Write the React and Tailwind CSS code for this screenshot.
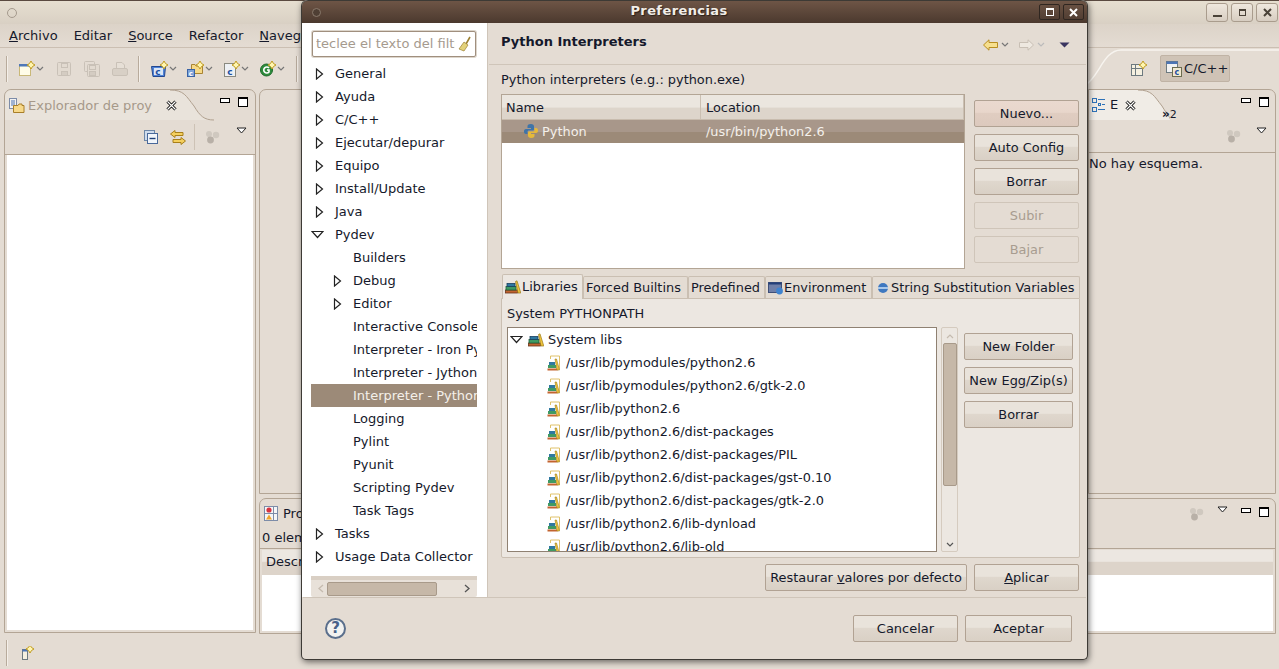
import React from 'react';

const FONT = "font-['DejaVu_Sans','Liberation_Sans',sans-serif]";

// small triangles for the trees
function Closed() {
  return (
    <svg width="9" height="12" viewBox="0 0 9 12" className="shrink-0">
      <path d="M1.5 1 L7.5 6 L1.5 11 Z" fill="#fff" stroke="#222" strokeWidth="1.2" />
    </svg>
  );
}

function Open() {
  return (
    <svg width="13" height="9" viewBox="0 0 13 9" className="shrink-0">
      <path d="M1 1.5 L12 1.5 L6.5 7.5 Z" fill="#fff" stroke="#222" strokeWidth="1.2" />
    </svg>
  );
}

function Chevron({ color = '#777' }) {
  return (
    <svg width="8" height="6" viewBox="0 0 8 6" className="shrink-0">
      <path d="M1 1 L4 4 L7 1" fill="none" stroke={color} strokeWidth="1.2" />
    </svg>
  );
}

function Spark({ x, y }) {
  return (
    <path
      d={`M${x} ${y - 4} Q${x + 1} ${y - 1} ${x + 4} ${y} Q${x + 1} ${y + 1} ${x} ${y + 4} Q${x - 1} ${y + 1} ${x - 4} ${y} Q${x - 1} ${y - 1} ${x} ${y - 4} Z`}
      fill="#fff6b0"
      stroke="#c09a20"
      strokeWidth="1"
    />
  );
}

function NewIcon() {
  return (
    <svg width="18" height="16" viewBox="0 0 18 16" className="shrink-0">
      <rect x="1.5" y="3.5" width="11" height="11" fill="#fffce8" stroke="#c9b878" />
      <rect x="1" y="3" width="12" height="2.5" fill="#4f78b8" />
      <Spark x={13} y={4} />
    </svg>
  );
}

function DiskIcon({ double }) {
  return (
    <svg width="16" height="16" viewBox="0 0 16 16" fill="none" stroke="#c9c1b7" className="shrink-0">
      {double && <rect x="0.5" y="0.5" width="10" height="10" rx="1" />}
      <rect x={double ? 3.5 : 1.5} y={double ? 3.5 : 1.5} width={double ? 12 : 13} height={double ? 12 : 13} rx="1" fill="#e2dad0" />
      <rect x="5.5" y={double ? 4.5 : 2.5} width="6" height="4" />
      <rect x="5.5" y="10.5" width="6" height="4" fill="#d4ccc2" />
    </svg>
  );
}

function PrintIcon() {
  return (
    <svg width="16" height="16" viewBox="0 0 16 16" fill="#e6dfd6" stroke="#c9c1b7" className="shrink-0">
      <path d="M4.5 7.5 L4.5 1.5 L10 1.5 L12.5 4 L12.5 7.5" />
      <rect x="0.5" y="7.5" width="15" height="7" rx="1.5" fill="#d8d0c6" />
    </svg>
  );
}

function CIcon({ kind }) {
  if (kind === 'g') {
    return (
      <svg width="18" height="16" viewBox="0 0 18 16" className="shrink-0">
        <circle cx="7.5" cy="9" r="6" fill="#2e8b3d" stroke="#1c6a2a" />
        <path d="M10 7 A3 3 0 1 0 10 11 L10 9 L8 9" fill="none" stroke="#fff" strokeWidth="1.6" />
        <Spark x={13} y={4} />
      </svg>
    );
  }
  const body =
    kind === 'folder' ? (
      <>
        <path d="M4.5 3.5 L8 3.5 L9 5 L15.5 5 L15.5 12.5 L4.5 12.5 Z" fill="#f6d987" stroke="#a98433" />
        <rect x="0.5" y="8.5" width="7" height="7" fill="#7fa3d8" stroke="#3a63a5" />
      </>
    ) : kind === 'file' ? (
      <rect x="1.5" y="2.5" width="11" height="13" fill="#eef1f4" stroke="#8a8a80" />
    ) : (
      <>
        <path d="M0.5 5.5 L14.5 5.5 L13.5 15.5 L2 15.5 Z" fill="#4f84d8" stroke="#23478f" />
        <rect x="3" y="7" width="9" height="7" fill="#dbe6f6" />
      </>
    );
  const small = kind === 'folder';
  return (
    <svg width="18" height="16" viewBox="0 0 18 16" className="shrink-0">
      {body}
      <text x={small ? 1.8 : 4.2} y={small ? 14.5 : 13.5} fontSize={small ? 7 : 9} fontWeight="700" fill={small ? '#fff' : '#1f4fa0'} fontFamily="DejaVu Sans">c</text>
      <Spark x={13} y={4} />
    </svg>
  );
}

function DropIcon({ children, className = '' }) {
  return (
    <div className={`flex items-center ${className}`}>
      {children}
      <Chevron />
    </div>
  );
}

function Sep() {
  return <div className="w-[2px] h-[26px] bg-[#f4efe9] border-l border-[#b8ab9c] shrink-0" />;
}

function MinMax() {
  return (
    <div className="flex items-start gap-[8px]">
      <div className="w-[10px] h-[5px] mt-px border border-black bg-white" />
      <div className="w-[10px] h-[10px] border border-black bg-white border-t-[2px]" />
    </div>
  );
}

function ViewMenu() {
  return (
    <svg width="11" height="7" viewBox="0 0 11 7">
      <path d="M1 1 L10 1 L5.5 6 Z" fill="#fff" stroke="#222" />
    </svg>
  );
}

function Dots() {
  return (
    <svg width="15" height="14" viewBox="0 0 15 14" fill="#cfc8bf">
      <circle cx="4" cy="4" r="3" />
      <circle cx="11" cy="5" r="3.2" />
      <circle cx="5.5" cy="10" r="3.4" fill="#b8b0a7" />
    </svg>
  );
}

function CloseX() {
  return (
    <svg width="11" height="11" viewBox="0 0 11 11" className="shrink-0 relative z-10">
      <path d="M1.5 1.5 L9.5 9.5 M9.5 1.5 L1.5 9.5" stroke="#000" strokeWidth="3" />
      <path d="M1.5 1.5 L9.5 9.5 M9.5 1.5 L1.5 9.5" stroke="#fff" strokeWidth="1.2" />
    </svg>
  );
}

// curve that finishes a view tab
function TabCurve({ width = 44, fill = '#e9e3db' }) {
  return (
    <svg width={width} height="31" viewBox={`0 0 ${width} 31`} className="shrink-0 -ml-px">
      <path d={`M0 0 C14 0 16 6 24 16 C30 26 34 30 ${width} 30 L0 30 Z`} fill={fill} />
      <path d={`M0 0 C14 0 16 6 24 16 C30 26 34 30 ${width} 30`} fill="none" stroke="#b0a08f" />
    </svg>
  );
}

function FolderProjIcon() {
  return (
    <svg width="16" height="16" viewBox="0 0 16 16" className="shrink-0">
      <rect x="0.5" y="0.5" width="7" height="10" fill="#f2f2f2" stroke="#7d8ca8" />
      <path d="M2 3h4M2 5h4M2 7h4" stroke="#4d75b5" />
      <path d="M4.5 7.5 L9 7.5 L10 6 L13 6 L13 7.5 L15 7.5 L15 14.5 L4.5 14.5 Z" fill="#f7d98a" stroke="#a87f2a" />
    </svg>
  );
}

function ProblemsIcon() {
  return (
    <svg width="15" height="15" viewBox="0 0 15 15" className="shrink-0">
      <rect x="0.5" y="0.5" width="13" height="14" fill="#f6f6f6" stroke="#7d8ca8" />
      <path d="M0.5 7.5h13M9.5 0.5v14" stroke="#7d8ca8" />
      <circle cx="5" cy="4" r="2.6" fill="#d8343f" />
      <path d="M5 8.5 L8 13.5 L2 13.5 Z" fill="#f0a52c" />
    </svg>
  );
}

function OutlineIcon() {
  return (
    <svg width="14" height="14" viewBox="0 0 14 14" fill="none" stroke="#2e72b8" className="shrink-0">
      <rect x="0.5" y="0.5" width="4" height="4" />
      <rect x="0.5" y="9.5" width="4" height="4" />
      <rect x="6.5" y="5.5" width="2" height="2" />
      <path d="M6 1.5h7M6 11.5h7M10 6.5h3" />
    </svg>
  );
}

function PerspIcon() {
  return (
    <svg width="16" height="15" viewBox="0 0 16 15" className="shrink-0">
      <rect x="0.5" y="3.5" width="11" height="11" fill="#f5f0e0" stroke="#6d7a80" />
      <path d="M0.5 7.5h11M4.5 3.5v11" stroke="#6d7a80" />
      <Spark x={12} y={4} />
    </svg>
  );
}

function CppPerspIcon() {
  return (
    <svg width="16" height="16" viewBox="0 0 16 16" className="shrink-0">
      <rect x="0.5" y="0.5" width="11" height="11" fill="#f2f2f2" stroke="#6d7a80" />
      <rect x="0.5" y="0.5" width="11" height="2.5" fill="#4d75b5" />
      <rect x="6.5" y="6.5" width="9" height="9" fill="#f0e8d0" stroke="#6d6d50" />
      <text x="8.5" y="14" fontSize="8" fontWeight="700" fill="#1f4fa0" fontFamily="DejaVu Sans">c</text>
    </svg>
  );
}

function PythonIcon() {
  return (
    <svg width="16" height="16" viewBox="0 0 16 16" className="shrink-0">
      <path d="M8 1 C5 1 4.5 2 4.5 3.5 L4.5 5 L8 5 L8 6 L3 6 C1.5 6 1 7 1 8.5 C1 10 1.5 11 3 11 L4.5 11 L4.5 9 C4.5 8 5 7.5 6 7.5 L9.5 7.5 C10.5 7.5 11 7 11 6 L11 3.5 C11 2 10 1 8 1 Z" fill="#3f74a8" />
      <path d="M8 15 C11 15 11.5 14 11.5 12.5 L11.5 11 L8 11 L8 10 L13 10 C14.5 10 15 9 15 7.5 C15 6 14.5 5 13 5 L11.5 5 L11.5 7 C11.5 8 11 8.5 10 8.5 L6.5 8.5 C5.5 8.5 5 9 5 10 L5 12.5 C5 14 6 15 8 15 Z" fill="#e6b93a" />
    </svg>
  );
}

function BooksIcon() {
  return (
    <svg width="16" height="14" viewBox="0 0 16 14" className="shrink-0">
      <rect x="0.5" y="10" width="12" height="3" fill="#c2632f" stroke="#6a3418" strokeWidth="0.8" />
      <rect x="1" y="6.5" width="10" height="3.5" fill="#3f9a63" stroke="#1f5f3a" strokeWidth="0.8" />
      <rect x="2" y="3.5" width="8" height="3" fill="#2f78a0" stroke="#1a4060" strokeWidth="0.8" />
      <path d="M10.5 1.5 L12 0.8 L15.8 13 L13 13 Z" fill="#f0c53c" stroke="#9b7a18" strokeWidth="0.7" />
    </svg>
  );
}

function JarIcon() {
  return (
    <svg width="14" height="16" viewBox="0 0 14 16" className="shrink-0">
      <path d="M3.5 4 L3.5 1 L12.5 1 L12.5 14.5" fill="none" stroke="#e0c26a" />
      <path d="M0.5 14.5 L10.5 14.5" stroke="#c2632f" strokeWidth="2" />
      <rect x="1" y="10" width="8" height="3" fill="#3f9a63" />
      <rect x="2" y="7" width="6" height="3" fill="#2f78a0" />
      <path d="M8 4 L9.5 4 L12.5 15 L10 15 Z" fill="#f0c53c" stroke="#9b7a18" strokeWidth="0.6" />
    </svg>
  );
}

function Btn({ children, w = 'w-[105px]', hot, disabled }) {
  const bg = hot
    ? 'bg-[linear-gradient(#ead9cf_0%,#e8d6cb_45%,#e0cdc1_50%,#dcc9bd_100%)]'
    : 'bg-[linear-gradient(#e9e3db_0%,#e9e3db_45%,#dfd7cd_50%,#d9d0c5_100%)]';
  return (
    <div
      className={`${w} h-[27px] shrink-0 rounded-[2px] border border-[#b1a293] flex items-center justify-center whitespace-nowrap ${
        disabled ? 'bg-[#e4dcd3] border-[#cfc5b9] text-[#a89d90]' : `${bg} text-[#15192b]`
      }`}
    >
      {children}
    </div>
  );
}

function WinBtn({ children }) {
  return (
    <div className="w-[22px] h-[19px] rounded-[3px] border border-[#a99c8d] bg-[linear-gradient(#efe8de,#d7cdc1)] flex items-center justify-center">
      {children}
    </div>
  );
}

function Outer() {
  return (
    <div className="w-[1279px] h-[669px] flex flex-col bg-[#e4dcd3]">
      {/* title bar */}
      <div className="h-[24px] shrink-0 border-t border-[#5a4a40] bg-[linear-gradient(#e6dfd0,#d9d0c4)] flex items-center justify-between pl-[7px] pr-[1px]">
        <div className="w-[10px] h-[10px] rounded-full border border-[#a59a8d]" />
        <div className="flex gap-[3px]">
          <WinBtn><div className="w-[9px] h-[2px] mt-[6px] bg-[#4a4238]" /></WinBtn>
          <WinBtn><div className="w-[7px] h-[7px] border border-[#4a4238] border-t-2" /></WinBtn>
          <WinBtn>
            <svg width="9" height="9" viewBox="0 0 9 9"><path d="M1 1 L8 8 M8 1 L1 8" stroke="#4a4238" strokeWidth="2" /></svg>
          </WinBtn>
        </div>
      </div>
      {/* menu */}
      <div className="h-[24px] shrink-0 flex items-center pl-[9px] gap-[16px] border-b border-[#cbbfb2] bg-[linear-gradient(#dcd3c8,#e4dcd3)] text-[#15192b]">
        <span><u>A</u>rchivo</span>
        <span>Editar</span>
        <span><u>S</u>ource</span>
        <span>Refac<u>t</u>or</span>
        <span><u>N</u>avegar</span>
      </div>
      {/* toolbar */}
      <div className="h-[41px] shrink-0 flex items-center pl-[6px] relative">
        <Sep />
        <DropIcon className="ml-[10px]"><NewIcon /></DropIcon>
        <div className="ml-[12px] flex gap-[12px]">
          <DiskIcon />
          <DiskIcon double />
          <PrintIcon />
        </div>
        <div className="ml-[10px]"><Sep /></div>
        <DropIcon className="ml-[11px]"><CIcon kind="class" /></DropIcon>
        <DropIcon className="ml-[10px]"><CIcon kind="folder" /></DropIcon>
        <DropIcon className="ml-[10px]"><CIcon kind="file" /></DropIcon>
        <DropIcon className="ml-[10px]"><CIcon kind="g" /></DropIcon>
        <div className="ml-[11px]"><Sep /></div>
        <svg width="200" height="40" viewBox="0 0 200 40" className="absolute left-[1085px] top-0">
          <path d="M0 37 C14 30 18 2 36 2 L200 2" fill="none" stroke="#f7f4ef" strokeWidth="1.4" />
        </svg>
        <div className="ml-auto mr-[49px] flex items-center gap-[13px] relative">
          <PerspIcon />
          <div className="w-[70px] h-[27px] rounded-[2px] border border-[#c0b3a5] bg-[#cfc3b6] flex items-center gap-[2px] pl-[5px] text-[#15192b]">
            <CppPerspIcon />
            <span>C/C++</span>
          </div>
        </div>
      </div>
      {/* views */}
      <div className="flex-1 min-h-0 flex gap-[3px] pl-[4px] pr-[3px]">
        <section className="w-[252px] h-[544px] shrink-0 border border-[#b3a595] rounded-t-[7px] flex flex-col">
          <div className="h-[30px] shrink-0 flex items-start">
            <div className="w-[166px] h-[30px] pt-px rounded-tl-[7px] bg-[#e9e3db] flex items-center pl-[4px] gap-[3px] text-[#a6998a]">
              <FolderProjIcon />
              <span className="whitespace-nowrap">Explorador de proy</span>
              <div className="ml-[11px] shrink-0"><CloseX /></div>
            </div>
            <TabCurve />
            <div className="ml-auto mr-[7px] mt-[7px]"><MinMax /></div>
          </div>
          <div className="h-[35px] shrink-0 border-b border-[#b3a595] flex items-center justify-end pr-[8px]">
            <svg width="14" height="14" viewBox="0 0 14 14">
              <rect x="0.5" y="0.5" width="10" height="10" fill="#cfdcec" stroke="#6d87a8" />
              <rect x="3.5" y="3.5" width="10" height="10" fill="#f1f5fa" stroke="#49699a" />
              <path d="M5.5 8.5h6" stroke="#1d3f78" strokeWidth="1.4" />
            </svg>
            <svg width="16" height="15" viewBox="0 0 16 15" fill="#f4cf5e" stroke="#a87f1a" className="ml-[12px]">
              <path d="M0.5 4 L5 0.5 L5 2.5 L13 2.5 L13 5.5 L5 5.5 L5 7.5 Z" />
              <path d="M15.5 11 L11 7.5 L11 9.5 L3 9.5 L3 12.5 L11 12.5 L11 14.5 Z" />
            </svg>
            <div className="w-px h-[26px] ml-[8px] bg-[#cdc2b5]" />
            <div className="ml-[10px]"><Dots /></div>
            <div className="ml-[16px] mb-[14px]"><ViewMenu /></div>
          </div>
          <div className="flex-1 mx-[2px] mb-[2px] bg-white" />
        </section>
        <div className="flex-1 min-w-0 flex flex-col">
          <div className="h-[405px] shrink-0 flex gap-[3px]">
            <section className="flex-1 border border-[#b3a595] rounded-tl-[7px]" />
            <section className="w-[188px] shrink-0 border border-[#b3a595] rounded-tr-[7px] flex flex-col">
              <div className="h-[30px] shrink-0 flex">
                <div className="w-[50px] h-[30px] bg-[#f0ece6] flex items-center pl-[3px] text-[#15192b] whitespace-nowrap">
                  <OutlineIcon />
                  <span className="ml-[4px]">E</span>
                  <div className="ml-[7px]"><CloseX /></div>
                </div>
                <TabCurve width={32} fill="#f0ece6" />
                <div className="ml-[-8px] mt-[3px] text-[12px] leading-none flex items-end text-[#15192b]">
                  <span className="font-bold">»</span><span className="mt-[7px] text-[11px]">2</span>
                </div>
                <div className="ml-auto mr-[6px] mt-[7px]"><MinMax /></div>
              </div>
              <div className="h-[33px] shrink-0 border-b border-[#b3a595] flex items-center justify-end pr-[8px] gap-[15px]">
                <Dots />
                <div className="mb-[12px]"><ViewMenu /></div>
              </div>
              <div className="pt-px text-[#15192b] whitespace-nowrap">No hay esquema.</div>
            </section>
          </div>
          <section className="h-[136px] mt-[4px] shrink-0 border border-[#b3a595] rounded-t-[7px] flex flex-col">
            <div className="h-[29px] shrink-0 flex items-center pl-[4px] gap-[4px] text-[#15192b]">
              <ProblemsIcon />
              <span>Problemas</span>
              <div className="ml-auto mr-[6px] flex items-center gap-[13px]">
                <Dots />
                <div className="mb-[8px]"><ViewMenu /></div>
                <div className="mb-[4px]"><MinMax /></div>
              </div>
            </div>
            <div className="h-[21px] shrink-0 border-b border-[#b3a595] pl-[2px] text-[#15192b] leading-[20px]">0 elementos</div>
            <div className="h-[25px] shrink-0 mt-[1px] mx-[2px] bg-[linear-gradient(#ece7e1_0%,#ece7e1_45%,#ddd4ca_50%,#ddd4ca_100%)] pl-[4px] leading-[24px] text-[#15192b]">Descripción</div>
            <div className="flex-1 mx-[2px] mb-[2px] bg-white" />
          </section>
        </div>
      </div>
      {/* status bar */}
      <div className="h-[33px] shrink-0 flex items-center pl-[6px] gap-[11px]">
        <Sep />
        <svg width="16" height="14" viewBox="0 0 16 14">
          <rect x="3.5" y="3.5" width="5" height="10" fill="#f5f0e0" stroke="#6d7a80" />
          <rect x="3.5" y="3.5" width="5" height="2" fill="#4d75b5" />
          <Spark x={11} y={3} />
        </svg>
      </div>
    </div>
  );
}

const TREE = [
  ['General', 0, 1],
  ['Ayuda', 0, 1],
  ['C/C++', 0, 1],
  ['Ejecutar/depurar', 0, 1],
  ['Equipo', 0, 1],
  ['Install/Update', 0, 1],
  ['Java', 0, 1],
  ['Pydev', 0, 2],
  ['Builders', 1, 0],
  ['Debug', 1, 1],
  ['Editor', 1, 1],
  ['Interactive Console', 1, 0],
  ['Interpreter - Iron Python', 1, 0],
  ['Interpreter - Jython', 1, 0],
  ['Interpreter - Python', 1, 0, true],
  ['Logging', 1, 0],
  ['Pylint', 1, 0],
  ['Pyunit', 1, 0],
  ['Scripting Pydev', 1, 0],
  ['Task Tags', 1, 0],
  ['Tasks', 0, 1],
  ['Usage Data Collector', 0, 1],
];

const LIBS = [
  '/usr/lib/pymodules/python2.6',
  '/usr/lib/pymodules/python2.6/gtk-2.0',
  '/usr/lib/python2.6',
  '/usr/lib/python2.6/dist-packages',
  '/usr/lib/python2.6/dist-packages/PIL',
  '/usr/lib/python2.6/dist-packages/gst-0.10',
  '/usr/lib/python2.6/dist-packages/gtk-2.0',
  '/usr/lib/python2.6/lib-dynload',
  '/usr/lib/python2.6/lib-old',
];

function TreeRow({ label, depth, arrow, selected }) {
  return (
    <div className={`h-[23px] flex items-center whitespace-nowrap overflow-hidden ${selected ? 'bg-[#9c8a78] text-[#f4f0ea]' : 'text-[#15192b]'}`}>
      <div className={`${depth ? 'w-[42px]' : 'w-[24px]'} shrink-0 flex justify-end pr-[11px]`}>
        {arrow === 1 && <Closed />}
        {arrow === 2 && <Open />}
      </div>
      <span>{label}</span>
    </div>
  );
}

function Tab({ children, active, w }) {
  return (
    <div
      className={`${w} shrink-0 flex items-center gap-[2px] whitespace-nowrap border border-[#cabfb2] rounded-t-[2px] pl-[2px] text-[#15192b] ${
        active ? 'h-[25px] -mb-px z-10 bg-[#ece7e1] border-b-0' : 'h-[22px] bg-[#e4dcd3] border-b-0'
      }`}
    >
      {children}
    </div>
  );
}

function Dialog() {
  return (
    <div className="absolute left-[301px] top-0 w-[787px] h-[660px] rounded-t-[6px] rounded-b-[5px] border border-[#3d3a35] border-t-0 bg-[#e4dcd3] shadow-[1px_2px_6px_rgba(0,0,0,0.55)] flex flex-col">
      {/* title */}
      <div className="h-[23px] shrink-0 rounded-t-[6px] bg-[linear-gradient(#6e5546,#4b392e)] border-t border-[#3d3a35] flex items-center relative pl-[10px]">
        <div className="w-[9px] h-[9px] rounded-full border border-[#8a7a6c] bg-[#4f3f34]" />
        <div className="flex-1 text-center -mt-[3px] mr-[2px] text-[#f2eee8] font-bold tracking-[0.4px] [text-shadow:1px_1px_1px_#2a1f18]">Preferencias</div>
        <div className="flex gap-[3px] pr-[3px]">
          <div className="w-[21px] h-[16px] rounded-[2px] border border-[#2f2620] flex items-center justify-center">
            <div className="w-[8px] h-[8px] border border-white border-t-2" />
          </div>
          <div className="w-[21px] h-[16px] rounded-[2px] border border-[#2f2620] flex items-center justify-center">
            <svg width="9" height="9" viewBox="0 0 9 9"><path d="M1 1 L8 8 M8 1 L1 8" stroke="#fff" strokeWidth="2" /></svg>
          </div>
        </div>
      </div>
      <div className="flex-1 min-h-0 flex">
        {/* left tree */}
        <div className="w-[186px] shrink-0 bg-white border-r border-[#cfc5b9] flex flex-col pl-[9px] pr-[10px]">
          <div className="mt-[8px] mx-px h-[26px] shrink-0 border border-[#a08f7e] rounded-[2px] bg-white flex items-center pl-[3px] overflow-hidden text-[#a59a8e] whitespace-nowrap shadow-[0_0_0_1px_#ddd6cc]">
            <span className="w-[139px] overflow-hidden">teclee el texto del filtro</span>
            <svg width="14" height="16" viewBox="0 0 14 16" className="shrink-0 ml-[3px]">
              <path d="M12 1 L8 8" stroke="#9c8030" strokeWidth="1.6" />
              <path d="M6 6 L10 9 L6 15 L1 13 Z" fill="#e3d27a" stroke="#9c8030" strokeWidth="0.7" />
            </svg>
          </div>
          <div className="mt-[5px]">
            {TREE.map(([label, depth, arrow, selected]) => (
              <TreeRow key={label} label={label} depth={depth} arrow={arrow} selected={selected} />
            ))}
          </div>
          <div className="mt-[8px] h-[21px] shrink-0 bg-[#e8e1d9] border-t-[4px] border-[#d9cfc4] rounded-b-[2px] flex items-center px-[7px]">
            <svg width="6" height="9" viewBox="0 0 6 9"><path d="M5 1 L1 4.5 L5 8" fill="none" stroke="#c5bbaf" strokeWidth="1.3" /></svg>
            <div className="w-[110px] h-[14px] ml-[3px] bg-[#c6b8a8] border border-[#a89a8a] rounded-[2px]" />
            <svg width="6" height="9" viewBox="0 0 6 9" className="ml-auto"><path d="M1 1 L5 4.5 L1 8" fill="none" stroke="#555" strokeWidth="1.3" /></svg>
          </div>
        </div>
        {/* right side */}
        <div className="flex-1 min-w-0 flex flex-col text-[12.9px]">
          <div className="h-[42px] shrink-0 mx-px border-b border-[#cfc5b9] flex items-start pl-[12px] pr-[16px]">
            <div className="mt-[9px] font-bold text-[13px] text-[#15192b]">Python Interpreters</div>
            <div className="ml-auto mt-[16px] flex items-center">
              <svg width="15" height="12" viewBox="0 0 15 12"><path d="M0.5 6 L6 0.8 L6 3.5 L14.5 3.5 L14.5 8.5 L6 8.5 L6 11.2 Z" fill="#f6df8e" stroke="#b88d20" /></svg>
              <div className="ml-[3px]"><Chevron /></div>
              <svg width="15" height="12" viewBox="0 0 15 12" className="ml-[10px]"><path d="M14.5 6 L9 0.8 L9 3.5 L0.5 3.5 L0.5 8.5 L9 8.5 L9 11.2 Z" fill="#eee8e0" stroke="#c8bfb4" /></svg>
              <div className="ml-[3px]"><Chevron color="#bbb" /></div>
              <svg width="11" height="6" viewBox="0 0 11 6" className="ml-[14px]"><path d="M0.5 0.5 L10.5 0.5 L5.5 5.5 Z" fill="#3a3560" /></svg>
            </div>
          </div>
          <div className="flex-1 min-h-0 flex flex-col pl-[13px] pr-[7px]">
            <div className="h-[29px] shrink-0 flex items-end pb-[7px] text-[#15192b] leading-none">Python interpreters (e.g.: python.exe)</div>
            <div className="flex gap-[9px] h-[175px] shrink-0">
              <div className="w-[464px] shrink-0 border border-[#b3a595] bg-white">
                <div className="h-[25px] flex bg-[linear-gradient(#ebe6df_0%,#ebe6df_50%,#ddd5cb_55%,#ddd5cb_100%)] border-b border-[#c8bcae] text-[#15192b] leading-[26px]">
                  <div className="w-[199px] pl-[4px] border-r border-[#cabfb2]">Name</div>
                  <div className="flex-1 pl-[5px] border-r border-[#cabfb2]">Location</div>
                </div>
                <div className="h-[23px] flex items-center bg-[linear-gradient(#a8978a_0%,#a8978a_50%,#9c8a78_50%,#9c8a78_100%)] text-[#f4f0ea]">
                  <div className="w-[199px] flex items-center pl-[21px] gap-[3px]">
                    <PythonIcon />
                    <span>Python</span>
                  </div>
                  <div className="pl-[5px]">/usr/bin/python2.6</div>
                </div>
              </div>
              <div className="flex flex-col gap-[7px] pt-[6px]">
                <Btn hot>Nuevo...</Btn>
                <Btn>Auto Config</Btn>
                <Btn>Borrar</Btn>
                <Btn disabled>Subir</Btn>
                <Btn disabled>Bajar</Btn>
              </div>
            </div>
            {/* tabs */}
            <div className="mt-[6px] pl-px h-[23px] shrink-0 flex items-end">
              <Tab active w="w-[81px]"><BooksIcon /><span className="-ml-px">Libraries</span></Tab>
              <Tab w="w-[105px]"><span>Forced Builtins</span></Tab>
              <Tab w="w-[77px]"><span>Predefined</span></Tab>
              <Tab w="w-[107px]">
                <svg width="16" height="14" viewBox="0 0 16 14" className="shrink-0">
                  <rect x="0.5" y="1.5" width="13" height="10" fill="#6f7fa8" stroke="#3f4f78" />
                  <rect x="0.5" y="1.5" width="13" height="2" fill="#24407a" />
                  <circle cx="11.5" cy="10" r="3.4" fill="#3f83cf" />
                </svg>
                <span className="-ml-[2px]">Environment</span>
              </Tab>
              <Tab w="w-[208px]">
                <svg width="12" height="12" viewBox="0 0 12 12" className="shrink-0 ml-[2px]">
                  <circle cx="6" cy="6" r="5" fill="#3f78c0" />
                  <rect x="1" y="5" width="10" height="2" fill="#a9c8ea" />
                </svg>
                <span>String Substitution Variables</span>
              </Tab>
            </div>
            <div className="w-[579px] h-[260px] shrink-0 border border-[#cabfb2] rounded-b-[2px] bg-[#ece7e1] flex flex-col px-[5px]">
              <div className="h-[28px] shrink-0 text-[#15192b] leading-[30px]">System PYTHONPATH</div>
              <div className="flex-1 min-h-0 flex pb-[5px]">
                <div className="w-[430px] shrink-0 border border-[#8f8172] bg-white overflow-hidden">
                  <div className="h-[23px] flex items-center pl-[2px] text-[#15192b]">
                    <Open />
                    <div className="ml-[5px] mr-[4px]"><BooksIcon /></div>
                    <span>System libs</span>
                  </div>
                  {LIBS.map((lib) => (
                    <div key={lib} className="h-[23px] flex items-center pl-[39px] gap-[5px] text-[#15192b] whitespace-nowrap">
                      <JarIcon />
                      <span>{lib}</span>
                    </div>
                  ))}
                </div>
                <div className="ml-[4px] w-[17px] shrink-0 border border-[#d5cbbf] rounded-[2px] flex flex-col items-center bg-[#ece7e1] pt-[5px] pb-[3px]">
                  <svg width="8" height="6" viewBox="0 0 8 6"><path d="M1 5 L4 2 L7 5" fill="none" stroke="#c5bbaf" strokeWidth="1.2" /></svg>
                  <div className="w-[14px] h-[143px] mt-[4px] bg-[#c6b8a8] border border-[#a89a8a] rounded-[2px]" />
                  <div className="mt-auto"><Chevron color="#555" /></div>
                </div>
                <div className="ml-[6px] flex flex-col gap-[7px] pt-[6px]">
                  <Btn w="w-[109px]">New Folder</Btn>
                  <Btn w="w-[109px]">New Egg/Zip(s)</Btn>
                  <Btn w="w-[109px]">Borrar</Btn>
                </div>
              </div>
            </div>
            <div className="mt-[6px] w-[578px] flex justify-end gap-[7px] shrink-0">
              <Btn w="w-[202px]"><span>Restaurar <u>v</u>alores por defecto</span></Btn>
              <Btn><span><u>A</u>plicar</span></Btn>
            </div>
          </div>
        </div>
      </div>
      {/* footer */}
      <div className="h-[62px] shrink-0 mx-px border-t border-[#cfc5b9] flex items-center pl-[22px] pr-[14px]">
        <div className="w-[21px] h-[21px] mb-px rounded-full border-2 border-[#5a6f8c] bg-[#f2f2f0] flex items-center justify-center text-[#47618a] font-bold leading-none text-[15px]">?</div>
        <div className="ml-auto flex gap-[7px]">
          <Btn>Cancelar</Btn>
          <Btn w="w-[107px]">Aceptar</Btn>
        </div>
      </div>
    </div>
  );
}

export default function App() {
  return (
    <div className={`relative w-[1279px] h-[669px] overflow-hidden text-[13px] ${FONT}`}>
      <Outer />
      <Dialog />
    </div>
  );
}
